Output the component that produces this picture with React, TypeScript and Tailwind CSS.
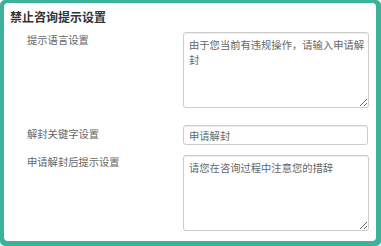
const font = { fontFamily: '"Liberation Sans", "Noto Sans CJK SC", sans-serif' };

export default function App() {
  return (
    <div
      className="w-[381px] h-[246px] bg-[#3bb39b] pl-[4px] pt-[3px] pr-[5px] pb-[5px] rounded-[5px]"
      style={font}
    >
      <div className="h-full bg-white rounded-[4px] pl-[6px] pr-[7px] pt-[7px]">
        <h2 className="text-[12px] leading-[16px] font-bold text-[#333]">禁止咨询提示设置</h2>

        <div className="mt-[6px] grid grid-cols-[173px_1fr]">
          <label className="pl-[17px] pt-[1px] text-[10.3px] leading-[15px] text-[#666]">提示语言设置</label>
          <textarea
            className="h-[76px] w-full border border-[#ccc] rounded-[3px] pl-[5px] pr-[2px] py-[5px] text-[10.3px] leading-[15px] text-[#666] shadow-[inset_0_1px_1px_rgba(0,0,0,0.075)] outline-none"
            defaultValue="由于您当前有违规操作，请输入申请解封"
          />
        </div>

        <div className="mt-[17px] grid grid-cols-[173px_1fr]">
          <label className="pl-[17px] pt-[2px] text-[10.3px] leading-[15px] text-[#666]">解封关键字设置</label>
          <input
            className="h-[20px] w-[185px] border border-[#ccc] rounded-[3px] px-[5px] text-[10.3px] text-[#666] shadow-[inset_0_1px_1px_rgba(0,0,0,0.075)] outline-none"
            defaultValue="申请解封"
          />
        </div>

        <div className="mt-[10px] grid grid-cols-[173px_1fr]">
          <label className="pl-[17px] pt-[0px] text-[10.3px] leading-[15px] text-[#666]">申请解封后提示设置</label>
          <textarea
            className="h-[76px] w-full border border-[#ccc] rounded-[3px] pl-[5px] pr-[2px] py-[5px] text-[10.3px] leading-[15px] text-[#666] shadow-[inset_0_1px_1px_rgba(0,0,0,0.075)] outline-none"
            defaultValue="请您在咨询过程中注意您的措辞"
          />
        </div>
      </div>
    </div>
  );
}
